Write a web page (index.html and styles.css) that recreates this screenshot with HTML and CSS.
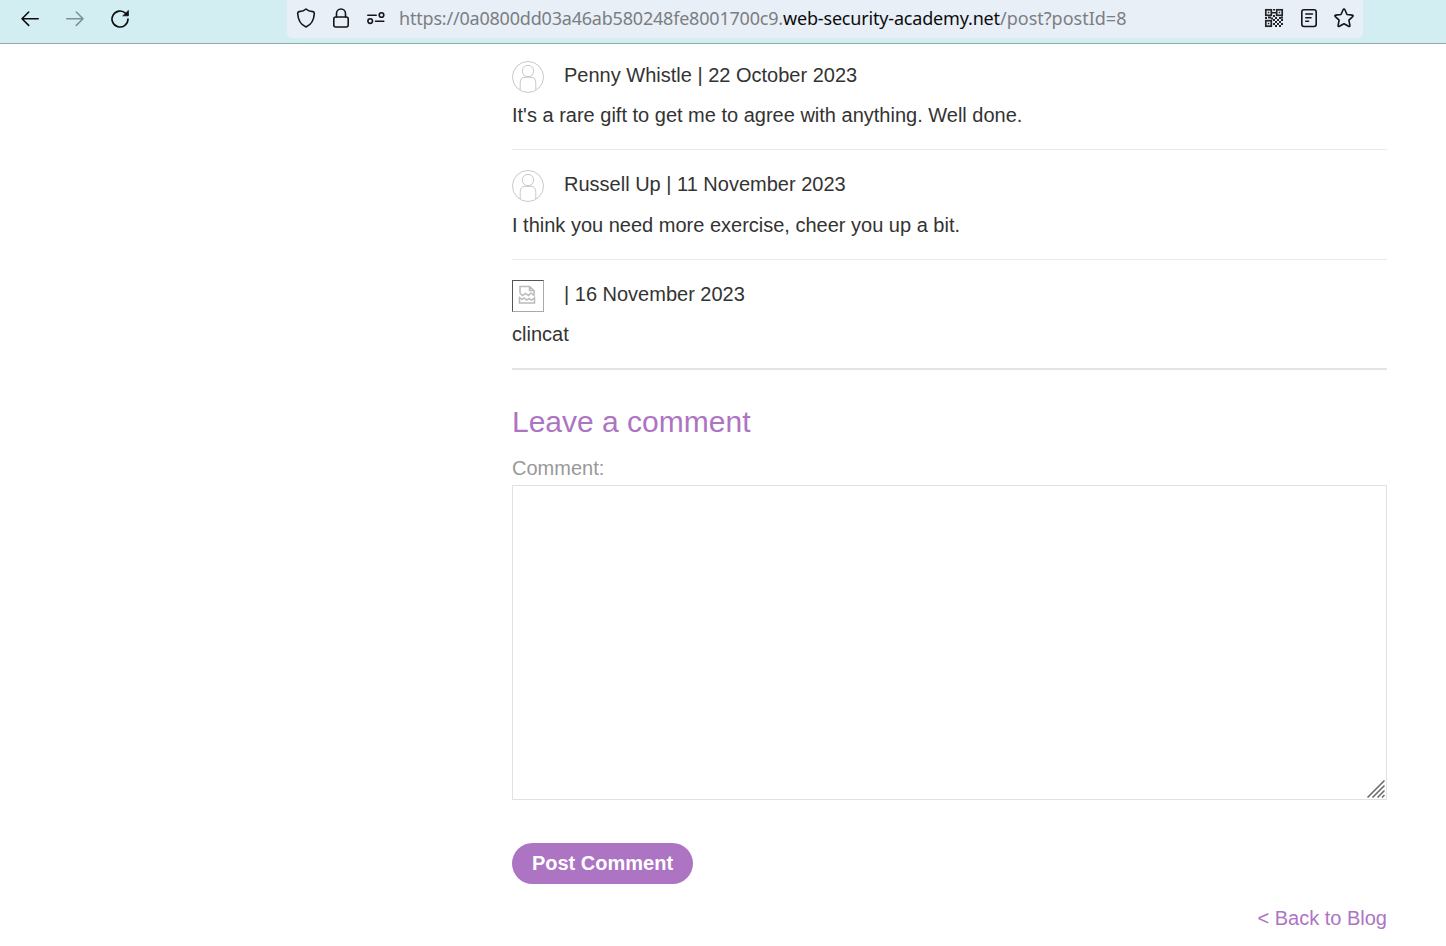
FILE: index.html
```html
<!DOCTYPE html>
<html lang="en">
<head>
<meta charset="utf-8">
<title>Blog post</title>
<link rel="stylesheet" href="styles.css">
</head>
<body>
<header class="toolbar">
  <nav class="nav">
    <svg class="icon" width="20" height="20" viewBox="0 0 20 20"><path d="M18.200 9.700H2M8.700 3L2 9.700L8.700 16.400"/></svg>
    <svg class="icon icon-off" width="20" height="20" viewBox="0 0 20 20"><path d="M1.800 9.700H18M11.300 3L18 9.700L11.300 16.400"/></svg>
    <svg class="icon" width="20" height="20" viewBox="0 0 20 20"><path d="M18 10A8 8 0 1 1 15.600 4.300"/><path class="solid" d="M18.400 1.800V6.800H13.200Z"/></svg>
  </nav>
  <div class="address">
    <svg class="icon thin" width="20" height="20" viewBox="0 0 20 20"><path d="M10 1Q12.500 3.300 16.900 3.600Q18.400 3.800 18.300 5.500C18 11.500 15.600 16.600 10 19C4.400 16.600 2 11.500 1.700 5.500Q1.600 3.800 3.100 3.600Q7.500 3.300 10 1Z"/></svg>
    <svg class="icon thin" width="20" height="20" viewBox="0 0 20 20"><rect x="2.800" y="9" width="14.400" height="10" rx="2"/><path d="M5.500 9V5.500A4.500 4.500 0 0 1 14.500 5.500V9"/></svg>
    <svg class="icon thin" width="20" height="20" viewBox="0 0 20 20"><path d="M1.800 7.200H10.200M9.500 13.300H17.800"/><circle cx="15.500" cy="7" r="2.300"/><circle cx="4.200" cy="13.100" r="2.300"/></svg>
    <div class="url"><span class="url-a">https://0a0800dd03a46ab580248fe8001700c9.</span><span class="url-host">web-security-academy.net</span><span class="url-b">/post?postId=8</span></div>
    <div class="tools">
      <svg class="qr" width="20" height="20" viewBox="0 0 20 20"><g fill="none" stroke="#252529" stroke-width="1.700"><rect x="1.800" y="1.800" width="5.500" height="5.500"/><rect x="12.700" y="1.800" width="5.500" height="5.500"/><rect x="1.800" y="12.700" width="5.500" height="5.500"/></g><path fill="#252529" d="M3.800 3.800h1.500v1.500h-1.500zM14.700 3.800h1.500v1.500h-1.500zM3.800 14.700h1.500v1.500h-1.500zM9 1h2v1.500h-2zM8 4h4v1.600h-4zM9 7h2v2h-2zM1 9h2v2h-2zM4 8.500h3v2h-3zM7 9.500h2v2h-2zM11 9h2v2h-2zM15 9h2v2h-2zM17 8.500h2v2h-2zM9 11h2v2h-2zM11 13h2v2h-2zM13 11h2v2h-2zM17 11h2v2h-2zM15 13h2v2h-2zM9 15h2v2h-2zM13 15h2v2h-2zM17 15h2v2h-2zM11 17h2v2h-2zM15 17h2v2h-2z"/></svg>
      <svg class="icon thin" width="20" height="20" viewBox="0 0 20 20"><rect x="2.800" y="1.800" width="14.400" height="16.700" rx="2.200"/><path d="M6.800 6H13.500M6.800 9.700H12M6.800 13.300H9.500"/></svg>
      <svg class="icon thin" width="20" height="20" viewBox="0 0 20 20"><path d="M10 1Q10.600 1 10.900 1.700L13 6.500L18.200 7.100Q19.700 7.400 18.700 8.600L14.900 12.100L15.900 17.300Q16 18.900 14.600 18.300L10 15.700L5.400 18.300Q4 18.900 4.100 17.300L5.100 12.100L1.300 8.600Q.3 7.400 1.800 7.100L7 6.500L9.100 1.700Q9.400 1 10 1Z"/></svg>
    </div>
  </div>
</header>
<main class="content">
  <section class="comment comment-first">
    <div class="meta"><svg class="avatar" viewBox="0 0 32 32"><circle cx="16" cy="16" r="15.500"/><circle cx="16" cy="10" r="5.700"/><path d="M8.200 29V22.500Q8.200 16.300 13 16.300H19Q23.800 16.300 23.800 22.500V29"/></svg><p class="author">Penny Whistle | 22 October 2023</p></div>
    <p class="text">It's a rare gift to get me to agree with anything. Well done.</p>
  </section>
  <section class="comment comment-second">
    <div class="meta"><svg class="avatar" viewBox="0 0 32 32"><circle cx="16" cy="16" r="15.500"/><circle cx="16" cy="10" r="5.700"/><path d="M8.200 29V22.500Q8.200 16.300 13 16.300H19Q23.800 16.300 23.800 22.500V29"/></svg><p class="author">Russell Up | 11 November 2023</p></div>
    <p class="text">I think you need more exercise, cheer you up a bit.</p>
  </section>
  <section class="comment comment-last">
    <div class="meta"><div class="broken"><svg width="18" height="20" viewBox="0 0 18 20"><path d="M2 8.500V1.500H11.500L16 5.500V10.500L13 8L10.500 10.500L7.500 8.500L4.500 10.500L2 8.500M11.500 1.500V5.500H16M1.500 18V12.500L4 14.500L6 13L8.500 15L11 13.500L13.500 15L16.500 13V18Z"/></svg></div><p class="author">| 16 November 2023</p></div>
    <p class="text">clincat</p>
  </section>
  <h2 class="title">Leave a comment</h2>
  <form class="form">
    <label class="label" for="comment">Comment:</label>
    <div class="field">
      <textarea class="input" id="comment"></textarea>
      <svg class="grip" width="18" height="18" viewBox="0 0 18 18"><path d="M.5 17.500L17.500.5M5.500 17.500L17.500 5.500M10.500 17.500L17.500 10.500M15 17.500L17.500 15"/></svg>
    </div>
    <button class="submit" type="button">Post Comment</button>
  </form>
  <a class="back">&lt; Back to Blog</a>
</main>
</body>
</html>
```
FILE: styles.css
```css
* { box-sizing: border-box; }
body { margin: 0; height: 946px; overflow: hidden; background: #fff; color: #333332; font: 20px/30px "Liberation Sans", Arial, sans-serif; }
p, h2 { margin: 0; }
.toolbar { display: flex; height: 44px; background: #d2eef2; border-bottom: 1px solid #94a9ac; }
.nav { display: flex; gap: 25px; width: 287px; padding: 9px 20px; }
.icon { flex: none; fill: none; stroke: #0c0c0d; stroke-width: 1.6; stroke-linecap: round; stroke-linejoin: round; }
.icon-off { stroke: #7e9092; }
.solid { fill: #0c0c0d; stroke-width: 0.8; }
.thin { stroke: #151519; stroke-width: 1.6; }
.address { display: flex; gap: 15px; width: 1076px; height: 38px; padding: 8px 9px; background: #e8eff7; border-radius: 0 0 5px 5px; }
.url { display: flex; margin: -1px 0 0 -2px; font: 18px/22px "Noto Sans", sans-serif; white-space: nowrap; color: #7b7e82; }
.url-a { width: 384px; letter-spacing: -0.2px; }
.url-host { width: 217px; letter-spacing: -0.18px; color: #0c0c0d; }
.url-b { width: 127px; }
.tools { display: flex; gap: 15px; margin-left: auto; }
.qr { flex: none; }
.content { width: 875px; margin-left: 512px; display: flex; flex-direction: column; }
.comment { height: 110px; padding-top: 20px; border-bottom: 1px solid #ebebeb; }
.comment-first { height: 106px; padding-top: 17px; }
.comment-last { border-bottom: 2px solid #e4e4e4; }
.meta { display: flex; gap: 20px; height: 32px; }
.avatar { width: 32px; height: 32px; fill: none; stroke: #c6caca; }
.author { margin-top: -1px; }
.text { margin-top: 7px; }
.comment-second .text { margin-top: 8px; }
.broken { width: 32px; height: 32px; padding: 4px 0 0 5px; border: 1px solid; border-color: #555 #aaa #aaa #555; }
.broken svg { display: block; fill: none; stroke: #bbb; stroke-width: 1.5; }
.title { margin-top: 32px; font-size: 30px; line-height: 40px; font-weight: 400; color: #ad74c3; }
.form { margin-top: 11px; }
.label { display: block; height: 32px; color: #999; }
.field { position: relative; height: 315px; }
.input { display: block; width: 875px; height: 315px; border: 1px solid #e2e2e2; border-radius: 0; resize: none; outline: none; background: #fff; }
.grip { position: absolute; right: 2px; bottom: 2px; fill: none; stroke: #666; stroke-width: 1.5; }
.submit { display: block; width: 181px; height: 41px; margin-top: 43px; padding: 0 0 1px; border: 0; border-radius: 21px; background: #ad74c3; color: #fff; font: bold 20px/40px "Liberation Sans", Arial, sans-serif; }
.back { align-self: flex-end; margin-top: 19px; color: #ad74c3; }
```
